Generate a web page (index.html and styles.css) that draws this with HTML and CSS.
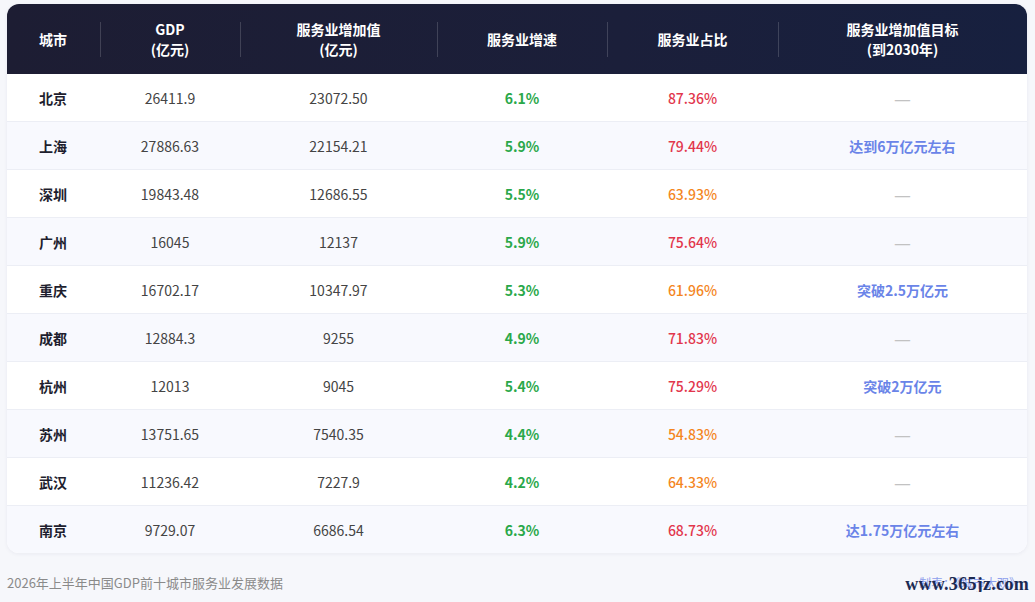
FILE: index.html
```html
<!DOCTYPE html>
<html lang="zh-CN">
<head>
<meta charset="utf-8">
<title>2026年上半年中国GDP前十城市服务业发展数据</title>
<link rel="stylesheet" href="styles.css">
</head>
<body>
<div class="page">
  <div class="card">
    <table class="data">
      <colgroup>
        <col class="c1"><col class="c2"><col class="c3"><col class="c4"><col class="c5"><col class="c6">
      </colgroup>
      <thead>
        <tr>
          <th class="city">城市</th>
          <th class="sep">GDP<br>(亿元)</th>
          <th class="sep">服务业增加值<br>(亿元)</th>
          <th class="sep">服务业增速</th>
          <th class="sep">服务业占比</th>
          <th class="sep">服务业增加值目标<br>(到2030年)</th>
        </tr>
      </thead>
      <tbody>
        <tr><td class="city">北京</td><td>26411.9</td><td>23072.50</td><td class="grow">6.1%</td><td class="hi">87.36%</td><td class="none">—</td></tr>
        <tr><td class="city">上海</td><td>27886.63</td><td>22154.21</td><td class="grow">5.9%</td><td class="hi">79.44%</td><td class="goal">达到6万亿元左右</td></tr>
        <tr><td class="city">深圳</td><td>19843.48</td><td>12686.55</td><td class="grow">5.5%</td><td class="mid">63.93%</td><td class="none">—</td></tr>
        <tr><td class="city">广州</td><td>16045</td><td>12137</td><td class="grow">5.9%</td><td class="hi">75.64%</td><td class="none">—</td></tr>
        <tr><td class="city">重庆</td><td>16702.17</td><td>10347.97</td><td class="grow">5.3%</td><td class="mid">61.96%</td><td class="goal">突破2.5万亿元</td></tr>
        <tr><td class="city">成都</td><td>12884.3</td><td>9255</td><td class="grow">4.9%</td><td class="hi">71.83%</td><td class="none">—</td></tr>
        <tr><td class="city">杭州</td><td>12013</td><td>9045</td><td class="grow">5.4%</td><td class="hi">75.29%</td><td class="goal">突破2万亿元</td></tr>
        <tr><td class="city">苏州</td><td>13751.65</td><td>7540.35</td><td class="grow">4.4%</td><td class="mid">54.83%</td><td class="none">—</td></tr>
        <tr><td class="city">武汉</td><td>11236.42</td><td>7227.9</td><td class="grow">4.2%</td><td class="mid">64.33%</td><td class="none">—</td></tr>
        <tr><td class="city">南京</td><td>9729.07</td><td>6686.54</td><td class="grow">6.3%</td><td class="hi">68.73%</td><td class="goal">达1.75万亿元左右</td></tr>
      </tbody>
    </table>
  </div>
  <div class="foot">
    <span class="title">2026年上半年中国GDP前十城市服务业发展数据</span>
    <span class="credit">制表：《城市大观》<span class="mark">www.365jz.com</span></span>
  </div>
</div>
</body>
</html>
```

FILE: styles.css
```css
html, body {
  margin: 0;
  padding: 0;
  background: #f6f7fb;
}
body {
  font-family: "Noto Sans CJK SC", "Noto Sans", sans-serif;
  color: #333;
}
.page {
  padding: 4px 8px 0 7px;
  width: 1020px;
}
.card {
  background: #ffffff;
  border-radius: 12px;
  overflow: hidden;
  box-shadow: 0 1px 4px rgba(30, 40, 90, 0.06);
}
.data {
  width: 1020px;
  border-collapse: collapse;
  table-layout: fixed;
}
.c1 { width: 93px; }
.c2 { width: 140px; }
.c3 { width: 197px; }
.c4 { width: 170px; }
.c5 { width: 171px; }
.c6 { width: 249px; }
thead tr {
  background: linear-gradient(90deg, #1d1d33 0%, #1b1f3a 60%, #17203f 100%);
}
th {
  height: 70px;
  padding: 0;
  color: #ffffff;
  font-size: 14px;
  font-weight: 700;
  line-height: 20px;
  text-align: center;
}
th.sep {
  background-image: linear-gradient(rgba(255,255,255,0.16), rgba(255,255,255,0.16));
  background-size: 1px 35px;
  background-position: left center;
  background-repeat: no-repeat;
}
th.city, td.city {
  text-align: left;
  padding-left: 32px;
}
td {
  height: 47px;
  padding: 0;
  font-size: 14px;
  text-align: center;
  color: #444;
  border-bottom: 1px solid #eceef5;
  line-height: 20px;
}
tbody tr:nth-child(even) td {
  background: #f8f9fe;
}
tbody tr:last-child td {
  border-bottom: none;
}
td.city {
  font-weight: 700;
  color: #1e1e2e;
}
td.grow {
  color: #2aa84a;
  font-weight: 600;
}
td.hi {
  color: #e2364c;
  font-weight: 500;
}
td.mid {
  color: #f4861e;
  font-weight: 500;
}
td.goal {
  color: #6a84e8;
  font-weight: 700;
}
td.none {
  color: #c2c2c2;
  font-size: 19px;
}
.foot {
  display: flex;
  justify-content: space-between;
  align-items: center;
  margin-top: 21px;
  font-size: 13px;
  line-height: 18px;
}
.foot .title {
  color: #8a8a8a;
}
.foot .credit {
  position: relative;
  color: #8fa0ec;
  font-size: 12px;
  margin-right: 6px;
}
.foot .mark {
  position: absolute;
  right: -8px;
  top: 1px;
  font-family: "Liberation Serif", "DejaVu Serif", serif;
  font-size: 18px;
  font-weight: 700;
  color: #1c2a52;
  white-space: nowrap;
  letter-spacing: 0.3px;
}
```
